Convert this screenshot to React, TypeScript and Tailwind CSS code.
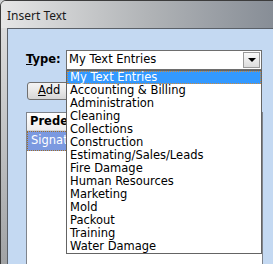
import React from 'react';

const entries = [
  'My Text Entries',
  'Accounting & Billing',
  'Administration',
  'Cleaning',
  'Collections',
  'Construction',
  'Estimating/Sales/Leads',
  'Fire Damage',
  'Human Resources',
  'Marketing',
  'Mold',
  'Packout',
  'Training',
  'Water Damage',
];

export default function App() {
  return (
    <div className="relative w-[273px] h-[264px] overflow-hidden bg-[#cfd1d3] font-['DejaVu_Sans',sans-serif] text-[11.5px] text-black">
      {/* window frame */}
      <div className="flex flex-col w-[300px] h-[340px] rounded-t-[6px] border border-[#3c3c3c] bg-gradient-to-b from-[#e2e2e2] via-[#b8babc] to-[#8e9092]">
        {/* title bar */}
        <div className="shrink-0 h-[27px] flex items-center pl-[6px] pt-[2px] bg-gradient-to-r from-[#e6e6e6] via-[#b0b3b6] to-[#7f8690] rounded-t-[5px]">
          <span className="font-['Noto_Sans',sans-serif] text-[12px] text-[#1a1a1a] leading-none">Insert Text</span>
        </div>

        {/* client */}
        <div className="flex-1 ml-[6px] border-l border-t border-[#5a6068] bg-[#c4d9f2] pt-[21px]">
          <div className="flex items-center h-[20px]">
            <span className="ml-[18px] w-[40px] font-bold">
              <span className="underline">T</span>ype:
            </span>
            <div className="flex items-center w-[196px] h-[20px] border border-[#6e6e6e] bg-white pl-[2px]">
              <span className="flex-1">My Text Entries</span>
              <div className="flex items-center justify-center w-[17px] h-[16px] mr-[1px] border border-[#9a9a9a] bg-gradient-to-b from-[#fafafa] to-[#dcdcdc]">
                <svg width="8" height="5" viewBox="0 0 8 5">
                  <path d="M0 0h8L4 4z" fill="#000" />
                </svg>
              </div>
            </div>
          </div>

          <div className="mt-[12px] ml-[19px] w-[80px] h-[18px] flex items-center pl-[10px] rounded-[3px] border border-[#707070] bg-gradient-to-b from-[#f4f4f4] via-[#e8e8e8] to-[#d6d6d6]">
            <span>
              <span className="underline">A</span>dd
            </span>
          </div>

          <div className="mt-[12px] ml-[18px] w-[237px] h-[200px] border border-[#7f848c] bg-white">
            <div className="h-[18px] flex items-center pl-[3px] border-b border-[#d5d5d5] bg-gradient-to-b from-[#ffffff] to-[#eeeeee] font-bold">
              Predefined Text
            </div>
            <div className="h-[20px] flex items-center pl-[3px] border border-dotted border-[#a0702a] bg-[#7b99e0] text-white">
              Signature
            </div>
          </div>
        </div>
      </div>

      {/* open dropdown list */}
      <div className="absolute left-[66px] top-[70px] w-[196px] border border-[#646464] bg-white">
        {entries.map((e, i) => (
          <div
            key={e}
            className={
              i === 0
                ? 'h-[13px] leading-[11px] pl-[2px] border border-dotted border-[#d08a3a] bg-[#3399ff] text-white'
                : 'h-[13px] leading-[13px] pl-[3px]'
            }
          >
            {e}
          </div>
        ))}
      </div>
    </div>
  );
}
